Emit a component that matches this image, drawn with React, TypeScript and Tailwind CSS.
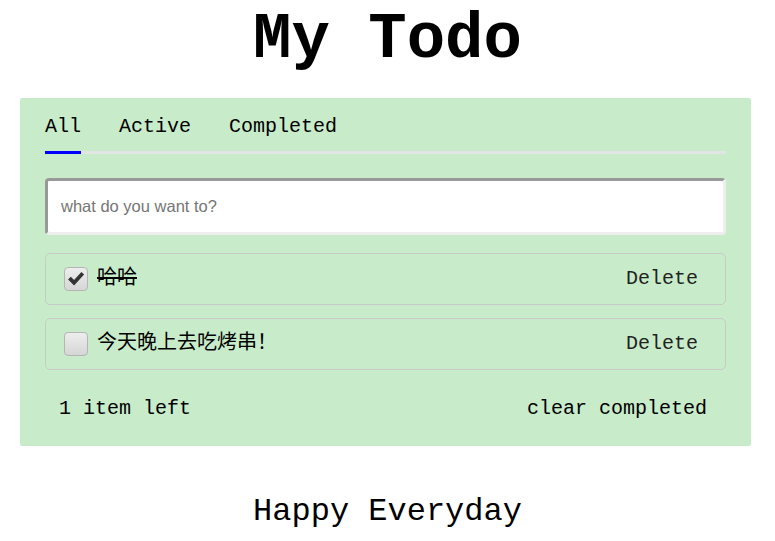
import React, { useState } from "react";

const mono = "font-['Liberation_Mono','Noto_Sans_CJK_SC',monospace]";

type Todo = { id: number; text: string; done: boolean };

const Check = ({ checked }: { checked: boolean }) => (
  <span className="flex h-6 w-6 shrink-0 items-center justify-center rounded-[4px] border border-[#b5b5b5] bg-gradient-to-b from-[#ededed] to-[#d6d6d6]">
    {checked && (
      <svg viewBox="0 0 24 24" className="h-[20px] w-[20px]">
        <path d="M2.5 12.5l3.2-3.2 4 4L18.5 3.5l3.2 3.2L9.7 19.8z" fill="#333" />
      </svg>
    )}
  </span>
);

const App = () => {
  const [todos] = useState<Todo[]>([
    { id: 1, text: "哈哈", done: true },
    { id: 2, text: "今天晚上去吃烤串！", done: false },
  ]);
  const left = todos.filter((t) => !t.done).length;

  return (
    <div className={`${mono} w-[775px] bg-white text-black`}>
      <h1 className="pt-[4px] text-center text-[64px] font-bold leading-[72px]">My Todo</h1>
      <div className="mx-5 mt-[22px] w-[731px] rounded-[2px] bg-[#c8ecca] px-[25px] pb-[25px] pt-[17px]">
        <div className="flex border-b-[3px] border-[#e4e4e4] text-[20px]">
          <div className="-mb-[3px] border-b-[3px] border-[#0000ff] pb-[12px] leading-[24px]">All</div>
          <div className="ml-[38px] pb-[12px] leading-[24px]">Active</div>
          <div className="ml-[38px] pb-[12px] leading-[24px]">Completed</div>
        </div>
        <input
          className="mt-[24px] block h-[57px] w-full rounded-[4px] border-[3px] border-b-[#eeeeee] border-l-[#999999] border-r-[#eeeeee] border-t-[#999999] bg-white px-[13px] font-['Liberation_Sans',sans-serif] text-[16.5px] outline-none placeholder:text-[#757575]"
          placeholder="what do you want to?"
        />
        <div className="mt-[18px] flex flex-col gap-[13px]">
          {todos.map((t) => (
            <div
              key={t.id}
              className="flex h-[52px] items-center rounded-[5px] border border-[#c9c9c9] pl-[18px] pr-[27px]"
            >
              <Check checked={t.done} />
              <span className={`ml-[9px] text-[20px] ${t.done ? "line-through" : ""}`}>{t.text}</span>
              <span className="ml-auto text-[20px] text-[#222]">Delete</span>
            </div>
          ))}
        </div>
        <div className="mt-[27px] flex items-center justify-between pl-[14px] pr-[19px] text-[20px] leading-[24px]">
          <span>{left} item left</span>
          <span>clear completed</span>
        </div>
      </div>
      <div className="mt-[48px] pb-4 text-center text-[32px] leading-[36px]">Happy Everyday</div>
    </div>
  );
};

export default App;
